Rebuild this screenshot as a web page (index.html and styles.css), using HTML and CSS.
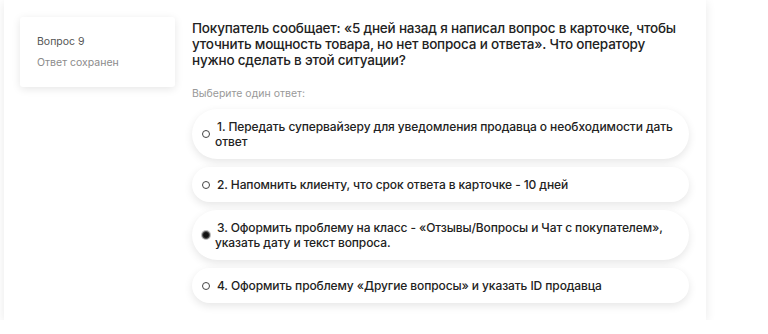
FILE: index.html
```html
<!DOCTYPE html>
<html lang="ru">
  <head>
    <meta charset="UTF-8">
    <title>Вопрос 9</title>
    <meta name="viewport" content="width=device-width, initial-scale=1">
    <link rel="stylesheet" href="styles.css">
  </head>
  <body>
    <div class="panel">
      <div class="info-card">
        <div class="info-title">Вопрос 9</div>
        <div class="info-state">Ответ сохранен</div>
      </div>

      <div class="question">
        <p class="question-text">Покупатель сообщает: «5 дней назад я написал вопрос в карточке, чтобы уточнить мощность товара, но нет вопроса и ответа». Что оператору нужно сделать в этой ситуации?</p>
        <div class="hint">Выберите один ответ:</div>

        <div class="answers">
          <label class="answer">
            <span class="radio"></span>
            <span class="answer-text">1. Передать супервайзеру для уведомления продавца о необходимости дать ответ</span>
          </label>
          <label class="answer">
            <span class="radio"></span>
            <span class="answer-text">2. Напомнить клиенту, что срок ответа в карточке - 10 дней</span>
          </label>
          <label class="answer">
            <span class="radio checked"></span>
            <span class="answer-text">3. Оформить проблему на класс - «Отзывы/Вопросы и Чат с покупателем», указать дату и текст вопроса.</span>
          </label>
          <label class="answer">
            <span class="radio"></span>
            <span class="answer-text">4. Оформить проблему «Другие вопросы» и указать ID продавца</span>
          </label>
        </div>
      </div>
    </div>
  </body>
</html>
```

FILE: styles.css
```css
body {
  margin: 0;
  background: #fff;
  font-family: Inter, "Noto Sans", sans-serif;
  color: #222;
}

.panel {
  display: flex;
  align-items: flex-start;
  margin-left: 4px;
  width: 702px;
  height: 320px;
  padding: 17px 0 0 16px;
  box-sizing: border-box;
  background: #fff;
  box-shadow: 0 2px 10px rgba(0, 0, 0, 0.09);
}

.info-card {
  width: 155px;
  height: 70px;
  padding: 18px 17px 0;
  box-sizing: border-box;
  border-radius: 3px;
  box-shadow: 0 2px 8px rgba(0, 0, 0, 0.1);
  font-size: 10.5px;
}

.info-title {
  color: #555;
  line-height: 14px;
}

.info-state {
  margin-top: 7px;
  color: #8b8b8b;
  line-height: 14px;
}

.question {
  margin-left: 17px;
  width: 497px;
}

.question-text {
  margin: 3px 0 0;
  font-size: 13.5px;
  font-weight: 500;
  letter-spacing: -0.2px;
  line-height: 16px;
}

.hint {
  margin-top: 20px;
  font-size: 10.5px;
  color: #999;
  line-height: 12px;
}

.answers {
  display: flex;
  flex-direction: column;
  gap: 8px;
  margin-top: 9px;
}

.answer {
  display: flex;
  align-items: center;
  gap: 5px;
  padding: 10px 8px 10px 10px;
  border-radius: 26px;
  background: #fff;
  box-shadow: 0 3px 8px rgba(0, 0, 0, 0.1);
  font-size: 12px;
  font-weight: 500;
  letter-spacing: -0.1px;
  line-height: 15px;
  cursor: pointer;
}

.radio {
  flex: none;
  width: 8px;
  height: 8px;
  border: 1px solid #444;
  border-radius: 50%;
  box-sizing: border-box;
}

.radio.checked {
  background: #111;
  border-color: #555;
  box-shadow: 0 0 0 1px #bbb;
}

.answer-text {
  text-indent: 2px;
}
```
